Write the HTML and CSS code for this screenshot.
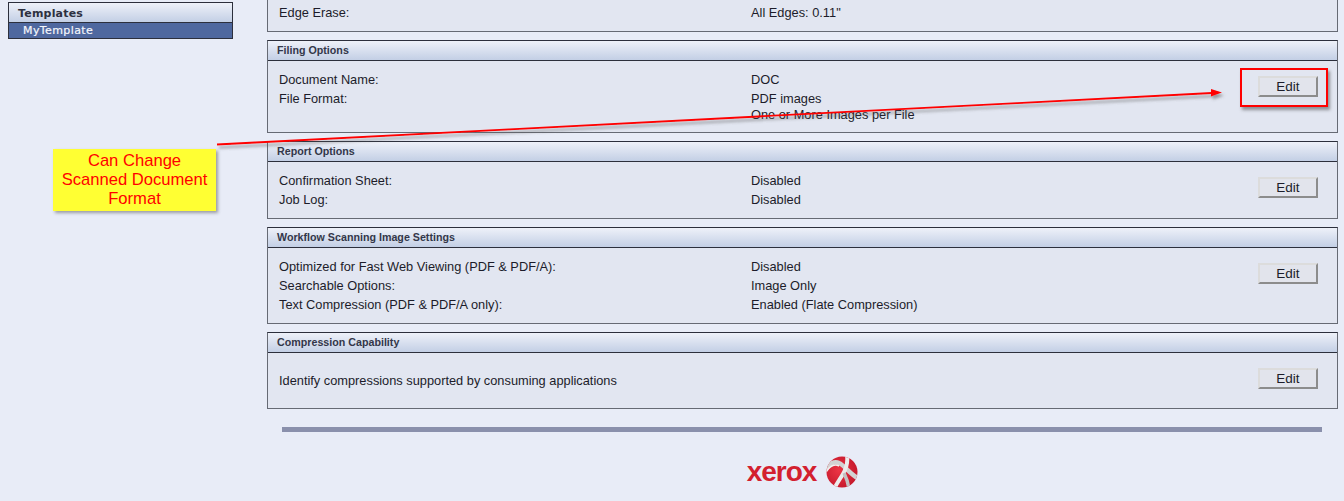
FILE: index.html
```html
<!DOCTYPE html>
<html lang="en">
<head>
<meta charset="utf-8">
<title>Workflow Template</title>
<link rel="stylesheet" href="styles.css">
</head>
<body>
<div class="page">
  <aside class="sidebar">
    <div class="side-box">
      <div class="side-head">Templates</div>
      <div class="side-item">MyTemplate</div>
    </div>
  </aside>
  <main class="main">
    <section class="panel panel-cut">
      <div class="body">
        <div class="rows">
          <div class="row"><span class="label">Edge Erase:</span><span class="value">All Edges: 0.11"</span></div>
        </div>
      </div>
    </section>
    <section class="panel">
      <h2 class="head">Filing Options</h2>
      <div class="body body-filing">
        <div class="rows">
          <div class="row"><span class="label">Document Name:</span><span class="value">DOC</span></div>
          <div class="row"><span class="label">File Format:</span><span class="value">PDF images</span></div>
          <div class="row row-tight"><span class="label"></span><span class="value">One or More Images per File</span></div>
        </div>
        <button class="edit" type="button">Edit</button>
      </div>
    </section>
    <section class="panel">
      <h2 class="head">Report Options</h2>
      <div class="body body-report">
        <div class="rows">
          <div class="row"><span class="label">Confirmation Sheet:</span><span class="value">Disabled</span></div>
          <div class="row"><span class="label">Job Log:</span><span class="value">Disabled</span></div>
        </div>
        <button class="edit" type="button">Edit</button>
      </div>
    </section>
    <section class="panel">
      <h2 class="head">Workflow Scanning Image Settings</h2>
      <div class="body body-workflow">
        <div class="rows">
          <div class="row"><span class="label">Optimized for Fast Web Viewing (PDF &amp; PDF/A):</span><span class="value">Disabled</span></div>
          <div class="row"><span class="label">Searchable Options:</span><span class="value">Image Only</span></div>
          <div class="row"><span class="label">Text Compression (PDF &amp; PDF/A only):</span><span class="value">Enabled (Flate Compression)</span></div>
        </div>
        <button class="edit" type="button">Edit</button>
      </div>
    </section>
    <section class="panel">
      <h2 class="head">Compression Capability</h2>
      <div class="body body-compress">
        <div class="rows">
          <div class="row"><span class="label label-wide">Identify compressions supported by consuming applications</span></div>
        </div>
        <button class="edit" type="button">Edit</button>
      </div>
    </section>
    <div class="rule"></div>
    <div class="logo">
      <span class="logo-word">xerox</span>
      <svg class="logo-ball" width="32" height="32" viewBox="0 0 32 32" aria-hidden="true">
        <defs>
          <radialGradient id="ballRed" cx="0.4" cy="0.45" r="0.7">
            <stop offset="0" stop-color="#ec3444"/>
            <stop offset="1" stop-color="#bf1428"/>
          </radialGradient>
          <clipPath id="ballClip"><circle cx="16" cy="16" r="15.5"/></clipPath>
        </defs>
        <circle cx="16" cy="16" r="15.5" fill="url(#ballRed)"/>
        <g clip-path="url(#ballClip)" fill="none">
          <path d="M-1 14 C3 7 9 5 13 7 C18 9 24 18 33 23" stroke="#d2d2d2" stroke-width="4.5"/>
          <path d="M0 16 C4 10 9 8 13 10" stroke="#f0f0f0" stroke-width="1.5"/>
          <path d="M21 -1 C22 6 20 13 17 18 C14 23 11 27 8 33" stroke="#ececec" stroke-width="4"/>
          <path d="M18 17 C20 21 22 26 23 33" stroke="#c2c2c2" stroke-width="3.5"/>
        </g>
      </svg>
    </div>
  </main>
</div>

<div class="callout">Can Change<br>Scanned Document<br>Format</div>
<div class="redbox"></div>
<svg class="arrow" width="1344" height="501" viewBox="0 0 1344 501" aria-hidden="true">
  <defs>
    <filter id="arrowShadow" x="-5%" y="-100%" width="110%" height="300%">
      <feDropShadow dx="2" dy="3" stdDeviation="1.5" flood-color="#555" flood-opacity="0.55"/>
    </filter>
  </defs>
  <g filter="url(#arrowShadow)">
    <line x1="217" y1="144.5" x2="1212" y2="93" stroke="#f00" stroke-width="1.8"/>
    <path d="M1211 89 L1222 92.5 L1211 96.5 Z" fill="#f00"/>
  </g>
</svg>
</body>
</html>
```

FILE: styles.css
```css
html, body {
  margin: 0;
  padding: 0;
  height: 501px;
  overflow: hidden;
  background: #e8ecf7;
}
.page {
  display: flex;
  align-items: flex-start;
  height: 501px;
  overflow: hidden;
  position: relative;
  font-family: "Liberation Sans", Arial, sans-serif;
  color: #1c1c2a;
}
.sidebar {
  width: 225px;
  margin-left: 8px;
  margin-top: 2px;
  flex: none;
}
.side-box {
  border: 1px solid #2c2f3c;
  font-family: "DejaVu Sans", Verdana, sans-serif;
  font-size: 11px;
}
.side-head {
  height: 19px;
  line-height: 21px;
  padding-left: 9px;
  font-weight: bold;
  letter-spacing: 0.2px;
  color: #2d3040;
  background: linear-gradient(#eef1f9, #c3cfe5);
  border-bottom: 1px solid #2c2f3c;
}
.side-item {
  height: 15px;
  line-height: 15px;
  padding-left: 14px;
  letter-spacing: 0.4px;
  -webkit-text-stroke: 0.2px #f4f6fb;
  color: #f4f6fb;
  background: #4f689f;
}
.main {
  width: 1071px;
  margin-left: 34px;
  flex: none;
}
.panel {
  box-sizing: border-box;
  border: 1px solid #666a74;
  border-top-color: #2c2f3c;
  background: #e2e6f1;
  margin-bottom: 8px;
}
.panel-cut {
  border-top: 0;
}
.head {
  margin: 0;
  box-sizing: border-box;
  height: 20px;
  line-height: 18px;
  padding-left: 9px;
  font-size: 10.7px;
  font-weight: bold;
  color: #333749;
  background: linear-gradient(#eef1f9, #c3cfe5);
  border-bottom: 1px solid #2c2f3c;
}
.body {
  display: flex;
  justify-content: space-between;
  align-items: flex-start;
  box-sizing: border-box;
  padding: 9px 19px 0 11px;
}
.panel-cut .body {
  height: 31px;
  padding-top: 3px;
}
.body-filing { height: 71px; }
.body-report { height: 56px; }
.body-workflow { height: 75px; }
.body-compress { height: 55px; padding-top: 18px; }
.rows {
  flex: 1;
}
.row {
  display: flex;
  height: 19px;
  line-height: 19px;
  font-size: 12.8px;
}
.row-tight {
  height: 13px;
  margin-top: -3px;
}
.label {
  width: 472px;
  flex: none;
}
.label-wide {
  width: auto;
}
.edit {
  width: 60px;
  height: 21px;
  margin-top: 6px;
  padding: 0;
  font: 13.5px "Liberation Sans", Arial, sans-serif;
  color: #1c1c2a;
  background: #e2e4ec;
  border: 2px solid;
  border-color: #dcdcdc #8c8c8c #8c8c8c #dcdcdc;
}
.body-compress .edit {
  margin-top: -3px;
}
.rule {
  height: 5px;
  margin: 18px 16px 0 15px;
  background: #8a90ac;
}
.logo {
  display: flex;
  align-items: center;
  justify-content: center;
  gap: 10px;
  margin-top: 24px;
}
.logo-word {
  font-family: "Liberation Sans", Arial, sans-serif;
  font-weight: bold;
  font-size: 28px;
  letter-spacing: -1px;
  line-height: 32px;
  color: #d3202f;
}
.logo-ball {
  display: block;
}
.callout {
  position: absolute;
  left: 53px;
  top: 149px;
  width: 163px;
  height: 62px;
  box-sizing: border-box;
  padding-top: 2px;
  background: #ffff33;
  color: #f00;
  font-family: "Liberation Sans", Arial, sans-serif;
  font-size: 16.6px;
  line-height: 19px;
  text-align: center;
  box-shadow: 2px 2px 3px rgba(60, 60, 60, 0.45);
}
.redbox {
  position: absolute;
  left: 1240px;
  top: 68px;
  width: 88px;
  height: 39px;
  box-sizing: border-box;
  border: 2px solid #f00;
  box-shadow: 2px 3px 3px rgba(60, 60, 60, 0.5);
}
.arrow {
  position: absolute;
  left: 0;
  top: 0;
  pointer-events: none;
}
```
